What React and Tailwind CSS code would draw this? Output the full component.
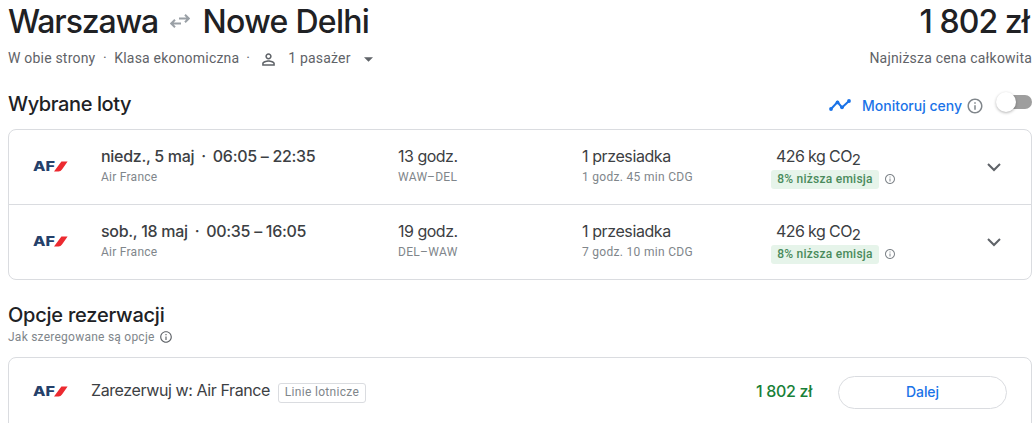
import React from 'react';

const flights = [
    { id: 1, date: 'niedz., 5 maj', time: '06:05 – 22:35', duration: '13 godz.', route: 'WAW–DEL', layover: '1 godz. 45 min CDG' },
    { id: 2, date: 'sob., 18 maj', time: '00:35 – 16:05', duration: '19 godz.', route: 'DEL–WAW', layover: '7 godz. 10 min CDG' },
];

const InfoIcon = ({ className }) => (
    <svg viewBox="0 0 24 24" fill="currentColor" className={className}>
        <path d="M11 7h2v2h-2zm0 4h2v6h-2zm1-9C6.48 2 2 6.48 2 12s4.48 10 10 10 10-4.48 10-10S17.52 2 12 2zm0 18c-4.41 0-8-3.59-8-8s3.59-8 8-8 8 3.59 8 8-3.59 8-8 8z" />
    </svg>
);

// Letters stay text, only the red stripe is drawn
const AirFranceLogo = () => (
    <svg viewBox="0 0 36 24" className="h-6 w-9 shrink-0 overflow-visible">
        <text x="0" y="16.4" fontFamily="Inter, sans-serif" fontSize="13.5" fontWeight="800" fill="#24406a" textLength="22" lengthAdjust="spacingAndGlyphs">AF</text>
        <path d="M21 16.6L28.4 6.6h6.2L29 14.6q-1.3 2-3.5 2z" fill="#ec2a30" />
    </svg>
);

const FlightRow = ({ flight }) => (
    <div className="flex h-[75px] border-b border-[#dadce0] pl-6 last:h-[74px] last:border-b-0">
        <div className="flex w-17 shrink-0 items-center">
            <AirFranceLogo />
        </div>
        <div className="w-[297px] shrink-0 pt-4">
            <p className="text-base leading-5 font-medium tracking-[-0.3px] text-[#3c4043]">
                {flight.date}<span className="px-[7px]">·</span>{flight.time}
            </p>
            <p className="font-[Roboto,sans-serif] text-xs leading-[22px] tracking-[0.25px] text-[#80868b]">Air France</p>
        </div>
        <div className="w-46 shrink-0 pt-4">
            <p className="text-base leading-5 tracking-[-0.5px] text-[#3c4043]">{flight.duration}</p>
            <p className="font-[Roboto,sans-serif] text-xs leading-[22px] tracking-[0.3px] text-[#80868b]">{flight.route}</p>
        </div>
        <div className="w-[189px] shrink-0 pt-4">
            <p className="text-base leading-5 tracking-[-0.4px] text-[#3c4043]">1 przesiadka</p>
            <p className="font-[Roboto,sans-serif] text-xs leading-[22px] tracking-[0.3px] text-[#80868b]">{flight.layover}</p>
        </div>
        <div className="w-[211px] shrink-0 pt-4">
            <p className="h-5 pl-[5px] text-base leading-5 tracking-[-0.6px] text-[#3c4043]">
                426 kg CO<sub className="bottom-[-3px] text-[15px] leading-none">2</sub>
            </p>
            <div className="mt-1 flex items-center">
                <span className="h-[19px] w-[108px] rounded-[3px] bg-[#e6f4ea] text-center font-[Roboto,sans-serif] text-xs leading-[19px] font-medium tracking-[0.25px] text-[#4a8b5c]">
                    8% niższa emisja
                </span>
                <InfoIcon className="mb-px ml-[5px] h-3 w-3 text-[#80868b]" />
            </div>
        </div>
        <div className="flex items-center">
            <svg viewBox="0 0 24 24" className="h-6 w-6" fill="#5f6368">
                <path d="M12 16.41l-6.71-6.7 1.42-1.42 5.29 5.3 5.29-5.3 1.42 1.42z" />
            </svg>
        </div>
    </div>
);

const App = () => {
    return (
        <div className="h-[423px] overflow-hidden bg-white pr-1 pl-2 font-[Inter,sans-serif] whitespace-nowrap text-[#202124]">
            {/* Trip summary */}
            <div className="flex h-11 items-center justify-between">
                <h1 className="flex items-center text-[32px] leading-11 font-medium">
                    <span className="tracking-[-1.1px]">Warszawa</span>
                    <svg viewBox="0 0 20 16" className="mr-[12.5px] mb-0.5 ml-[12px] h-4 w-5" fill="none" stroke="#9aa0a6" strokeWidth="2">
                        <path d="M9 5.5h9.5M15 1.7l3.8 3.8L15 9.3M11 10.5H1.5M5 6.7l-3.8 3.8L5 14.3" />
                    </svg>
                    <span className="tracking-[-0.7px]">Nowe Delhi</span>
                </h1>
                <p className="mr-[3px] text-[32px] leading-11 font-medium tracking-[-0.9px]">1 802 zł</p>
            </div>
            <div className="mt-1 flex h-5 items-center justify-between font-[Roboto,sans-serif] text-sm tracking-[0.2px] text-[#5f6368]">
                <div className="flex items-center">
                    <span>W obie strony</span>
                    <span className="px-[7.5px]">·</span>
                    <span>Klasa ekonomiczna</span>
                    <span className="px-[7px]">·</span>
                    <svg viewBox="0 0 24 24" className="mt-0.5 mr-2.5 ml-[2px] h-[19px] w-[19px]" fill="currentColor">
                        <path d="M12 5.9a2.1 2.1 0 110 4.2 2.1 2.1 0 010-4.2m0 9c2.97 0 6.1 1.46 6.1 2.1v1.1H5.9V17c0-.64 3.13-2.1 6.1-2.1M12 4C9.79 4 8 5.79 8 8s1.79 4 4 4 4-1.79 4-4-1.79-4-4-4zm0 9c-2.67 0-8 1.34-8 4v3h16v-3c0-2.66-5.33-4-8-4z" />
                    </svg>
                    <span>1 pasażer</span>
                    <svg viewBox="0 0 10 5" className="mt-0.5 ml-[13px] h-[5px] w-[9px]" fill="currentColor">
                        <path d="M0 0h10L5 5z" />
                    </svg>
                </div>
                <span>Najniższa cena całkowita</span>
            </div>

            {/* Selected flights */}
            <div className="mt-5 flex h-8 items-center justify-between">
                <h2 className="text-xl font-medium tracking-[-0.4px]">Wybrane loty</h2>
                <div className="flex items-center">
                    <svg viewBox="0 0 22 12" className="mt-0.5 mr-[11px] h-3 w-[22px]" fill="none" stroke="#1a73e8" strokeWidth="2">
                        <path d="M2 10L8.5 3l4.5 5.5L20 2" />
                        <g fill="#1a73e8" stroke="none">
                            <circle cx="2" cy="10" r="1.9" />
                            <circle cx="8.5" cy="3.4" r="1.9" />
                            <circle cx="13" cy="8.3" r="1.9" />
                            <circle cx="20" cy="2" r="1.9" />
                        </g>
                    </svg>
                    <span className="mt-[3px] text-sm font-medium text-[#1a73e8]">Monitoruj ceny</span>
                    <InfoIcon className="mt-[3px] ml-1 h-[18px] w-[18px] text-[#80868b]" />
                    <button className="mb-1 ml-[12px] flex h-5 w-[36px] items-center">
                        <span className="z-10 h-5 w-5 shrink-0 rounded-full bg-white shadow-[0_1px_3px_rgba(0,0,0,0.3)]" />
                        <span className="-ml-4 h-3.5 w-8 rounded-full bg-[#9e9e9e]" />
                    </button>
                </div>
            </div>
            <div className="mt-[9px] rounded-lg border border-[#dadce0]">
                {flights.map((flight) => (
                    <FlightRow key={flight.id} flight={flight} />
                ))}
            </div>

            {/* Booking options */}
            <h2 className="mt-[21px] text-xl leading-7 font-medium tracking-[-0.23px]">Opcje rezerwacji</h2>
            <div className="flex h-4 items-center font-[Roboto,sans-serif] text-xs tracking-[0.24px] text-[#80868b]">
                Jak szeregowane są opcje
                <InfoIcon className="ml-1 h-3.5 w-3.5 text-[#5f6368]" />
            </div>
            <div className="mt-3 flex h-24 items-start rounded-t-lg border border-[#dadce0] pt-[18px] pr-6 pl-6">
                <div className="flex h-8 w-[58px] items-center">
                    <AirFranceLogo />
                </div>
                <p className="text-base leading-7 tracking-[-0.4px] text-[#3c4043]">Zarezerwuj w: Air France</p>
                <span className="mt-[7px] ml-2 h-5 w-22 rounded-[3px] border border-[#dadce0] text-center font-[Roboto,sans-serif] text-xs leading-[17px] tracking-[0.3px] text-[#80868b]">
                    Linie lotnicze
                </span>
                <p className="ml-auto text-base leading-[30px] font-medium tracking-[-0.3px] text-[#188038]">1 802 zł</p>
                <button className="ml-[26px] h-[33px] w-[169px] rounded-full border border-[#dadce0] pb-0.5 text-sm font-medium tracking-[-0.1px] text-[#1a73e8]">
                    Dalej
                </button>
            </div>
        </div>
    );
};

export default App;
